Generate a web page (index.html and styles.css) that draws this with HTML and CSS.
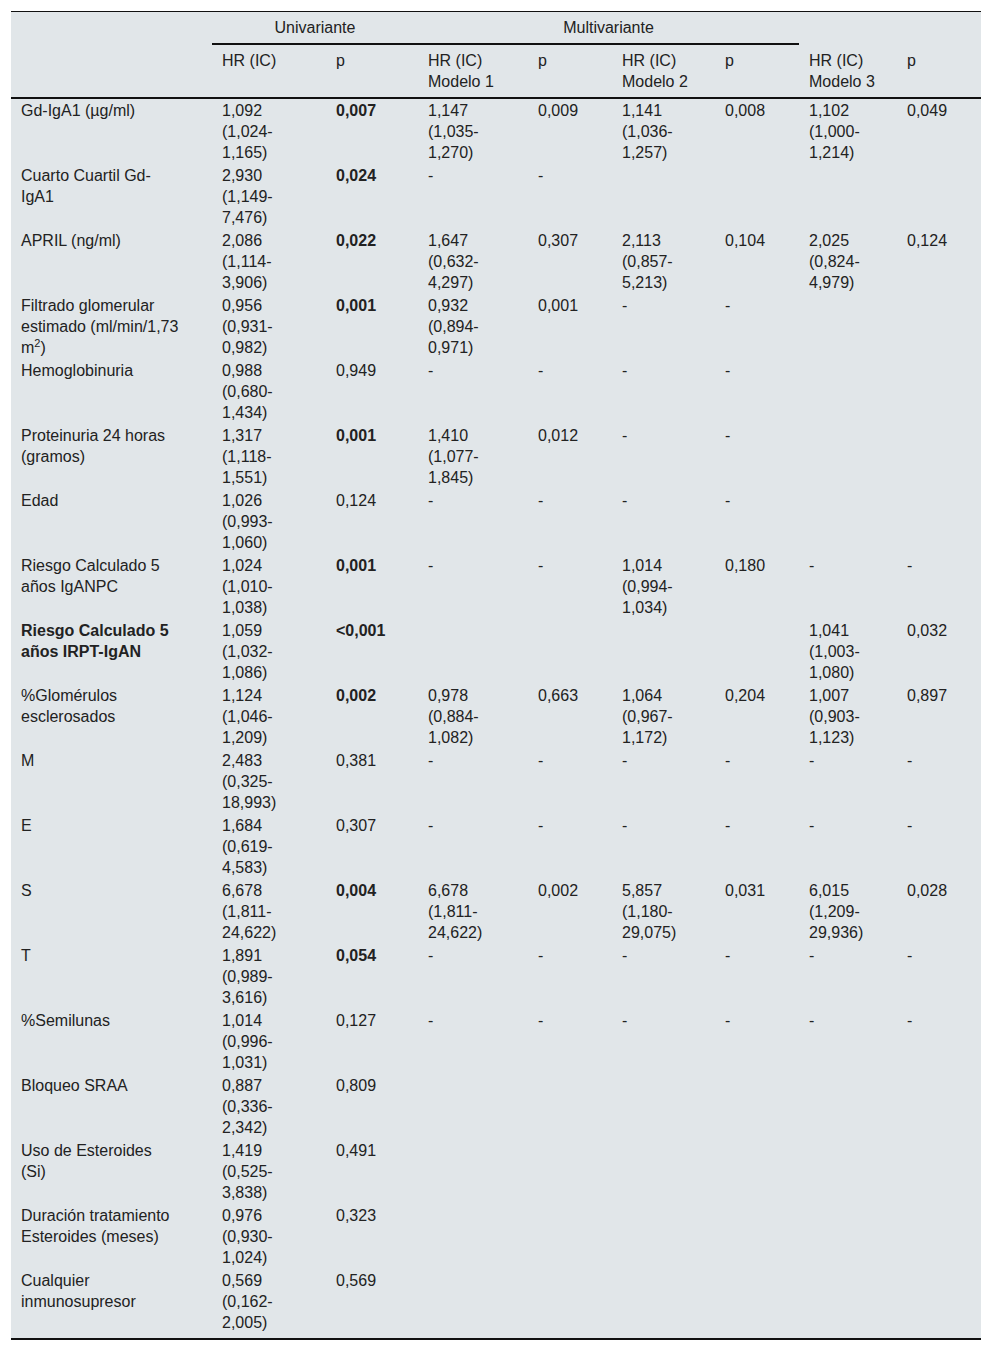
FILE: index.html
```html
<!DOCTYPE html>
<html lang="es">
<head>
<meta charset="utf-8">
<title>Tabla</title>
<link rel="stylesheet" href="styles.css">
</head>
<body>
<div class="page">
<table class="stats">
  <colgroup>
    <col class="c-label">
    <col class="c-hr1">
    <col class="c-p1">
    <col class="c-hr2">
    <col class="c-p">
    <col class="c-hr3">
    <col class="c-p">
    <col class="c-hr4">
    <col class="c-p">
  </colgroup>
  <thead>
    <tr>
      <th class="h-blank" rowspan="2"></th>
      <th class="h-group" colspan="2">Univariante</th>
      <th class="h-group" colspan="4">Multivariante</th>
      <th class="h-none" colspan="2"></th>
    </tr>
    <tr>
      <th class="h-sub">HR (IC)</th>
      <th class="h-sub">p</th>
      <th class="h-sub">HR (IC) Modelo 1</th>
      <th class="h-sub">p</th>
      <th class="h-sub">HR (IC) Modelo 2</th>
      <th class="h-sub">p</th>
      <th class="h-sub">HR (IC) Modelo 3</th>
      <th class="h-sub">p</th>
    </tr>
  </thead>
  <tbody>
    <tr>
      <td>Gd-IgA1 (µg/ml)</td>
      <td>1,092 (1,024-<wbr>1,165)</td><td class="b">0,007</td>
      <td>1,147 (1,035-<wbr>1,270)</td><td>0,009</td>
      <td>1,141 (1,036-<wbr>1,257)</td><td>0,008</td>
      <td>1,102 (1,000-<wbr>1,214)</td><td>0,049</td>
    </tr>
    <tr>
      <td>Cuarto Cuartil Gd-IgA1</td>
      <td>2,930 (1,149-<wbr>7,476)</td><td class="b">0,024</td>
      <td>-</td><td>-</td>
      <td></td><td></td><td></td><td></td>
    </tr>
    <tr>
      <td>APRIL (ng/ml)</td>
      <td>2,086 (1,114-<wbr>3,906)</td><td class="b">0,022</td>
      <td>1,647 (0,632-<wbr>4,297)</td><td>0,307</td>
      <td>2,113 (0,857-<wbr>5,213)</td><td>0,104</td>
      <td>2,025 (0,824-<wbr>4,979)</td><td>0,124</td>
    </tr>
    <tr>
      <td>Filtrado glomerular estimado (ml/min/1,73 m<sup>2</sup>)</td>
      <td>0,956 (0,931-<wbr>0,982)</td><td class="b">0,001</td>
      <td>0,932 (0,894-<wbr>0,971)</td><td>0,001</td>
      <td>-</td><td>-</td>
      <td></td><td></td>
    </tr>
    <tr>
      <td>Hemoglobinuria</td>
      <td>0,988 (0,680-<wbr>1,434)</td><td>0,949</td>
      <td>-</td><td>-</td>
      <td>-</td><td>-</td>
      <td></td><td></td>
    </tr>
    <tr>
      <td>Proteinuria 24 horas (gramos)</td>
      <td>1,317 (1,118-<wbr>1,551)</td><td class="b">0,001</td>
      <td>1,410 (1,077-<wbr>1,845)</td><td>0,012</td>
      <td>-</td><td>-</td>
      <td></td><td></td>
    </tr>
    <tr>
      <td>Edad</td>
      <td>1,026 (0,993-<wbr>1,060)</td><td>0,124</td>
      <td>-</td><td>-</td>
      <td>-</td><td>-</td>
      <td></td><td></td>
    </tr>
    <tr>
      <td>Riesgo Calculado 5 años IgANPC</td>
      <td>1,024 (1,010-<wbr>1,038)</td><td class="b">0,001</td>
      <td>-</td><td>-</td>
      <td>1,014 (0,994-<wbr>1,034)</td><td>0,180</td>
      <td>-</td><td>-</td>
    </tr>
    <tr>
      <td class="b">Riesgo Calculado 5 años IRPT-IgAN</td>
      <td>1,059 (1,032-<wbr>1,086)</td><td class="b">&lt;0,001</td>
      <td></td><td></td>
      <td></td><td></td>
      <td>1,041 (1,003-<wbr>1,080)</td><td>0,032</td>
    </tr>
    <tr>
      <td>%Glomérulos esclerosados</td>
      <td>1,124 (1,046-<wbr>1,209)</td><td class="b">0,002</td>
      <td>0,978 (0,884-<wbr>1,082)</td><td>0,663</td>
      <td>1,064 (0,967-<wbr>1,172)</td><td>0,204</td>
      <td>1,007 (0,903-<wbr>1,123)</td><td>0,897</td>
    </tr>
    <tr>
      <td>M</td>
      <td>2,483 (0,325-<wbr>18,993)</td><td>0,381</td>
      <td>-</td><td>-</td><td>-</td><td>-</td><td>-</td><td>-</td>
    </tr>
    <tr>
      <td>E</td>
      <td>1,684 (0,619-<wbr>4,583)</td><td>0,307</td>
      <td>-</td><td>-</td><td>-</td><td>-</td><td>-</td><td>-</td>
    </tr>
    <tr>
      <td>S</td>
      <td>6,678 (1,811-<wbr>24,622)</td><td class="b">0,004</td>
      <td>6,678 (1,811-<wbr>24,622)</td><td>0,002</td>
      <td>5,857 (1,180-<wbr>29,075)</td><td>0,031</td>
      <td>6,015 (1,209-<wbr>29,936)</td><td>0,028</td>
    </tr>
    <tr>
      <td>T</td>
      <td>1,891 (0,989-<wbr>3,616)</td><td class="b">0,054</td>
      <td>-</td><td>-</td><td>-</td><td>-</td><td>-</td><td>-</td>
    </tr>
    <tr>
      <td>%Semilunas</td>
      <td>1,014 (0,996-<wbr>1,031)</td><td>0,127</td>
      <td>-</td><td>-</td><td>-</td><td>-</td><td>-</td><td>-</td>
    </tr>
    <tr>
      <td>Bloqueo SRAA</td>
      <td>0,887 (0,336-<wbr>2,342)</td><td>0,809</td>
      <td></td><td></td><td></td><td></td><td></td><td></td>
    </tr>
    <tr>
      <td>Uso de Esteroides (Si)</td>
      <td>1,419 (0,525-<wbr>3,838)</td><td>0,491</td>
      <td></td><td></td><td></td><td></td><td></td><td></td>
    </tr>
    <tr>
      <td>Duración tratamiento Esteroides (meses)</td>
      <td>0,976 (0,930-<wbr>1,024)</td><td>0,323</td>
      <td></td><td></td><td></td><td></td><td></td><td></td>
    </tr>
    <tr class="last">
      <td>Cualquier inmunosupresor</td>
      <td>0,569 (0,162-<wbr>2,005)</td><td>0,569</td>
      <td></td><td></td><td></td><td></td><td></td><td></td>
    </tr>
  </tbody>
</table>
</div>
</body>
</html>
```

FILE: styles.css
```css
html, body {
  margin: 0;
  padding: 0;
  background: #ffffff;
}

.page {
  padding: 11px;
}

.stats {
  width: 970px;
  table-layout: fixed;
  border-collapse: separate;
  border-spacing: 0;
  background: #e1e6e9;
  border-top: 1px solid #111;
  border-bottom: 2px solid #111;
  font-family: "Liberation Sans", Arial, sans-serif;
  font-size: 16px;
  line-height: 21px;
  color: #222;
}

.c-label { width: 201px; }
.c-hr1 { width: 114px; }
.c-p1 { width: 92px; }
.c-hr2 { width: 110px; }
.c-hr3 { width: 103px; }
.c-hr4 { width: 98px; }
.c-p { width: 84px; }

.stats th {
  font-weight: normal;
  text-align: left;
  vertical-align: top;
  padding: 5px 20px 5px 10px;
}

.stats th.h-group {
  text-align: center;
  padding-left: 0;
  padding-right: 0;
  border-bottom: 2px solid #111;
}

.stats th.h-sub,
.stats th.h-blank {
  border-bottom: 2px solid #111;
}

.stats td {
  vertical-align: top;
  padding: 1px 20px 1px 10px;
}

.stats td:first-child {
  padding-right: 32px;
}

.stats .b {
  font-weight: bold;
}

.stats sup {
  font-size: 11px;
  line-height: 0;
  vertical-align: 6px;
}

.stats tr.last td {
  padding-bottom: 5px;
}
```
